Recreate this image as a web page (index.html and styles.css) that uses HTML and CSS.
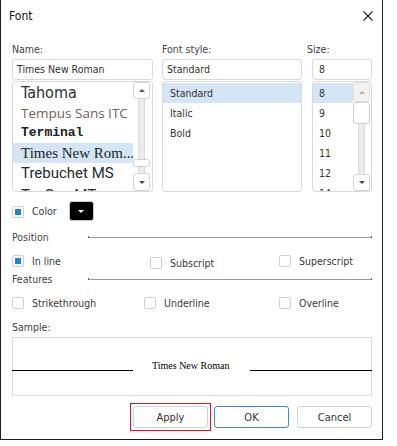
FILE: index.html
```html
<!DOCTYPE html>
<html>
<head>
<meta charset="utf-8">
<title>Font</title>
<link rel="stylesheet" href="styles.css">
</head>
<body>
<div class="dialog">
  <div class="titlebar">
    <span class="title">Font</span>
    <svg class="close" width="10" height="10" viewBox="0 0 10 10"><path d="M0.5 0.5L9.5 9.5M9.5 0.5L0.5 9.5" stroke="#222" stroke-width="1.1" fill="none"/></svg>
  </div>
  <div class="content">
    <div class="pickers">
      <div class="col col-name">
        <div class="label">Name:</div>
        <div class="input">Times New Roman</div>
        <div class="list">
          <div class="items">
            <div class="item f-tahoma">Tahoma</div>
            <div class="item f-tempus">Tempus Sans ITC</div>
            <div class="item f-terminal">Terminal</div>
            <div class="item f-times selected">Times New Rom...</div>
            <div class="item f-trebuchet">Trebuchet MS</div>
            <div class="item f-twcen">Tw Cen MT</div>
          </div>
          <div class="scrollbar sb-name">
            <div class="sb-btn sb-up"><span class="arr-up"></span></div>
            <div class="sb-track grow"></div>
            <div class="sb-thumb"></div>
            <div class="sb-track tail"></div>
            <div class="sb-btn sb-down"><span class="arr-down"></span></div>
          </div>
        </div>
      </div>
      <div class="col col-style">
        <div class="label">Font style:</div>
        <div class="input">Standard</div>
        <div class="list">
          <div class="items">
            <div class="item plain selected">Standard</div>
            <div class="item plain">Italic</div>
            <div class="item plain">Bold</div>
          </div>
        </div>
      </div>
      <div class="col col-size">
        <div class="label label-size">Size:</div>
        <div class="input">8</div>
        <div class="list">
          <div class="items">
            <div class="item size selected">8</div>
            <div class="item size">9</div>
            <div class="item size">10</div>
            <div class="item size">11</div>
            <div class="item size">12</div>
            <div class="item size">14</div>
          </div>
          <div class="scrollbar sb-size">
            <div class="sb-btn sb-up disabled"><span class="arr-up light"></span></div>
            <div class="sb-thumb big"></div>
            <div class="sb-track grow"></div>
            <div class="sb-btn sb-down"><span class="arr-down"></span></div>
          </div>
        </div>
      </div>
    </div>

    <div class="color-row">
      <span class="check checked"></span>
      <span class="check-label">Color</span>
      <span class="color-btn"><span class="arr-down white"></span></span>
    </div>

    <div class="group-head head-position">
      <span class="group-title">Position</span>
      <span class="group-line"></span>
    </div>

    <div class="check-row row-position">
      <div class="check-item w138"><span class="check checked"></span><span class="check-label">In line</span></div>
      <div class="check-item w129 lower"><span class="check"></span><span class="check-label">Subscript</span></div>
      <div class="check-item"><span class="check"></span><span class="check-label">Superscript</span></div>
    </div>

    <div class="group-head head-features">
      <span class="group-title">Features</span>
      <span class="group-line"></span>
    </div>

    <div class="check-row row-features">
      <div class="check-item w132"><span class="check"></span><span class="check-label">Strikethrough</span></div>
      <div class="check-item w135"><span class="check"></span><span class="check-label">Underline</span></div>
      <div class="check-item"><span class="check"></span><span class="check-label">Overline</span></div>
    </div>

    <div class="label sample-label">Sample:</div>
    <div class="sample">
      <div class="sample-row">
        <span class="base-line left"></span>
        <span class="sample-text">Times New Roman</span>
        <span class="base-line right"></span>
      </div>
    </div>

    <div class="buttons">
      <button class="btn btn-apply">Apply</button>
      <button class="btn btn-ok">OK</button>
      <button class="btn btn-cancel">Cancel</button>
    </div>
  </div>
</div>
</body>
</html>
```

FILE: styles.css
```css
* { box-sizing: border-box; }
html, body { margin: 0; padding: 0; background: #fff; }
body {
  font-family: "DejaVu Sans Condensed", Roboto, sans-serif;
  font-size: 10.5px;
  color: #3a3a3a;
}
.dialog {
  width: 383px;
  height: 440px;
  border: 1px solid #1c1c1c;
  border-top: none;
  display: flex;
  flex-direction: column;
}
.titlebar {
  height: 30px;
  flex: none;
  display: flex;
  align-items: center;
  justify-content: space-between;
  padding: 1px 9px 0 8px;
}
.title { font-size: 12px; color: #111; }
.close { display: block; }

.content {
  padding: 12px 10px 11px 11px;
  display: flex;
  flex-direction: column;
}

/* pickers */
.pickers { display: flex; }
.col { display: flex; flex-direction: column; }
.col-name { width: 141px; }
.col-style { width: 140px; margin-left: 9px; }
.col-size { width: 60px; margin-left: 10px; }
.label { height: 14px; line-height: 14px; color: #444; }
.label-size { margin-left: -5px; }
.input {
  margin-top: 3px;
  height: 21px;
  border: 1px solid #d9d9d9;
  border-radius: 3px;
  padding-left: 4px;
  line-height: 19px;
  color: #333;
  white-space: nowrap;
  overflow: hidden;
}
.col-size .input { padding-left: 6px; }
.list {
  margin-top: 1px;
  height: 111px;
  border: 1px solid #d9d9d9;
  border-radius: 3px;
  display: flex;
  overflow: hidden;
}
.items {
  flex: 1;
  min-width: 0;
  padding-top: 1px;
  overflow: hidden;
}
.item {
  height: 20px;
  line-height: 20px;
  white-space: nowrap;
  overflow: hidden;
  padding-left: 8px;
  color: #333;
}
.item.selected { background: #d4e6f5; }
.f-tahoma { font-family: "DejaVu Sans Condensed", "DejaVu Sans", sans-serif; font-size: 16px; color: #2e2e2e; }
.f-tempus { font-family: "Open Sans", sans-serif; font-size: 13.5px; color: #6f635b; }
.f-terminal { font-family: "Liberation Mono", monospace; font-size: 13px; font-weight: bold; color: #222; }
.f-times { font-family: "Liberation Serif", serif; font-size: 15px; color: #222; }
.f-trebuchet { font-family: Roboto, sans-serif; font-size: 15px; color: #2a2a2a; }
.f-twcen { font-family: Roboto, sans-serif; font-size: 15px; color: #2a2a2a; line-height: 24px; }
.item.plain { padding-left: 7px; }
.item.size { padding-left: 6px; }

/* scrollbars */
.scrollbar {
  flex: none;
  width: 17px;
  display: flex;
  flex-direction: column;
  align-items: center;
}
.sb-name { margin-right: 2px; }
.sb-size { margin-right: 1px; }
.sb-btn {
  width: 17px;
  border: 1px solid #d4d4d4;
  border-radius: 3px;
  background: #fff;
  display: flex;
  align-items: center;
  justify-content: center;
  flex: none;
}
.sb-up { height: 17px; }
.sb-down { height: 18px; }
.sb-size .sb-up { height: 20px; }
.sb-size .sb-down { height: 17px; }
.sb-btn.disabled { background: #f2f2f2; border-color: #e2e2e2; }
.sb-track {
  width: 7px;
  background: #ececec;
  border-left: 1px solid #dadada;
  border-right: 1px solid #dadada;
}
.sb-track.grow { flex: 1; }
.sb-track.tail { height: 6px; flex: none; }
.sb-thumb {
  width: 17px;
  height: 8px;
  border: 1px solid #d0d0d0;
  border-radius: 3px;
  background: #fff;
  flex: none;
}
.sb-thumb.big { height: 22px; }
.arr-up, .arr-down { width: 0; height: 0; display: block; }
.arr-up {
  border-left: 3px solid transparent;
  border-right: 3px solid transparent;
  border-bottom: 3px solid #555;
}
.arr-up.light { border-bottom-color: #aaa; }
.arr-down {
  border-left: 3px solid transparent;
  border-right: 3px solid transparent;
  border-top: 3px solid #444;
}
.arr-down.white { border-top-color: #fff; }

/* checkboxes */
.check {
  width: 12px;
  height: 12px;
  border: 1px solid #cfcfcf;
  border-radius: 2px;
  background: #fff;
  flex: none;
  position: relative;
}
.check.checked::after {
  content: "";
  position: absolute;
  left: 2px;
  top: 2px;
  width: 6px;
  height: 6px;
  background: #1f86d1;
}
.check-label { margin-left: 8px; color: #3a3a3a; white-space: nowrap; }

.color-row {
  margin-top: 9px;
  height: 20px;
  display: flex;
  align-items: center;
}
.color-row .check { margin-top: 1px; }
.color-btn {
  margin-left: 12px;
  width: 25px;
  height: 20px;
  background: #000;
  border: 1px solid #c8c8c8;
  border-radius: 3px;
  display: flex;
  align-items: center;
  justify-content: center;
}

.group-head {
  height: 14px;
  display: flex;
  align-items: center;
}
.head-position { margin-top: 9px; }
.head-features { margin-top: 4px; }
.group-title { width: 76px; color: #444; flex: none; }
.group-line {
  flex: 1;
  height: 1px;
  background: #9a9a9a;
  position: relative;
}
.group-line::before, .group-line::after {
  content: "";
  position: absolute;
  top: -1px;
  width: 1px;
  height: 2px;
  background: #666;
}
.group-line::before { left: 0; }
.group-line::after { right: 0; }

.check-row { display: flex; align-items: flex-start; }
.row-position { margin-top: 9px; height: 15px; }
.row-features { margin-top: 10px; height: 14px; }
.check-item { display: flex; align-items: center; height: 14px; flex: none; }
.row-position .check-item { margin-top: 1px; }
.row-position .check-item.lower { margin-top: 3px; }
.w138 { width: 138px; }
.w129 { width: 129px; }
.w132 { width: 132px; }
.w135 { width: 135px; }

.sample-label { margin-top: 10px; }
.sample {
  margin-top: 3px;
  height: 59px;
  border: 1px solid #dcdcdc;
  padding-top: 22px;
}
.sample-row {
  display: flex;
  align-items: flex-end;
  height: 12px;
  margin-left: -1px;
  margin-right: -1px;
}
.base-line {
  height: 1px;
  background: #000;
  margin-bottom: 1px;
}
.base-line.left { width: 121px; }
.base-line.right { flex: 1; }
.sample-text {
  font-family: "Liberation Serif", serif;
  font-size: 10px;
  line-height: 12px;
  color: #000;
  margin: 0 21px 0 19px;
  white-space: nowrap;
}

.buttons {
  margin-top: 10px;
  display: flex;
  justify-content: flex-end;
}
.btn {
  width: 75px;
  height: 22px;
  border: 1px solid #d2d2d2;
  border-radius: 3px;
  background: #fff;
  font-family: inherit;
  font-size: 11px;
  color: #333;
  padding: 0;
}
.btn-apply { position: relative; }
.btn-apply::after {
  content: "";
  position: absolute;
  left: -4px;
  top: -4px;
  right: -4px;
  bottom: -4px;
  border: 1px solid #e3121b;
}
.btn-ok { margin-left: 6px; border-color: #3f8ccc; }
.btn-cancel { margin-left: 8px; }
```
